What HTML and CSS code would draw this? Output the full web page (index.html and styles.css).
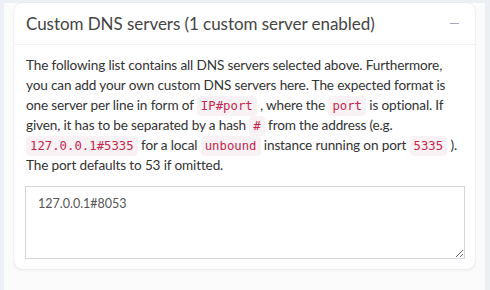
FILE: index.html
```html
<!DOCTYPE html>
<html>
<head>
<meta charset="utf-8">
<link rel="stylesheet" href="styles.css">
</head>
<body>
<div class="wrap">
  <div class="card">
    <div class="card-header">
      <h3 class="card-title">Custom DNS servers (1 custom server enabled)</h3>
      <span class="collapse-btn"></span>
    </div>
    <div class="card-body">
      <p class="desc">The following list contains all DNS servers selected above. Furthermore,<br>you can add your own custom DNS servers here. The expected format is<br>one server per line in form of <code>IP#port</code> , where the <code>port</code> is optional. If<br>given, it has to be separated by a hash <code>#</code> from the address (e.g.<br><code>127.0.0.1#5335</code> for a local <code>unbound</code> instance running on port <code>5335</code> ).<br>The port defaults to 53 if omitted.</p>
      <textarea class="servers">127.0.0.1#8053</textarea>
    </div>
  </div>
</div>
</body>
</html>
```
FILE: styles.css
```css
html, body {
  margin: 0;
  padding: 0;
}
body {
  background: #eceff4;
  width: 490px;
  height: 290px;
  overflow: hidden;
  font-family: "Lato", "Liberation Sans", sans-serif;
}
.wrap {
  margin: 3px 5px 0 4px;
  background: #fbfbfc;
  padding: 0 10px 30px 10px;
  height: 287px;
  box-sizing: border-box;
}
.card {
  background: #fff;
  border-radius: 8px;
  box-shadow: 0 0 1px rgba(0,0,0,0.12), 0 1px 3px rgba(0,0,0,0.08);
}
.card-header {
  height: 41px;
  display: flex;
  align-items: center;
  justify-content: space-between;
  padding: 0 16px 0 12px;
  border-bottom: 1px solid #f1f2f4;
}
.card-title {
  margin: 0;
  font-weight: 400;
  font-size: 17px;
  letter-spacing: -0.05px;
  color: #444;
}
.collapse-btn {
  width: 9px;
  height: 1.5px;
  background: #a4abb8;
}
.card-body {
  padding: 10px 10px 10px 11px;
}
.desc {
  margin: 0 0 11px 1px;
  font-size: 13.6px;
  line-height: 20px;
  letter-spacing: -0.15px;
  white-space: nowrap;
  color: #333;
}
code {
  font-family: "DejaVu Sans Mono", monospace;
  font-size: 12.3px;
  line-height: 1;
  letter-spacing: 0;
  color: #c7254e;
  background: #f9f2f4;
  padding: 3px 4px;
  border-radius: 4px;
}
.servers {
  display: block;
  width: 440px;
  height: 73px;
  box-sizing: border-box;
  margin: 0;
  padding: 9px 12px;
  border: 1px solid #d2d6de;
  border-radius: 0;
  font-family: "Lato", "Liberation Sans", sans-serif;
  font-size: 12.5px;
  color: #555;
  resize: vertical;
}
```
